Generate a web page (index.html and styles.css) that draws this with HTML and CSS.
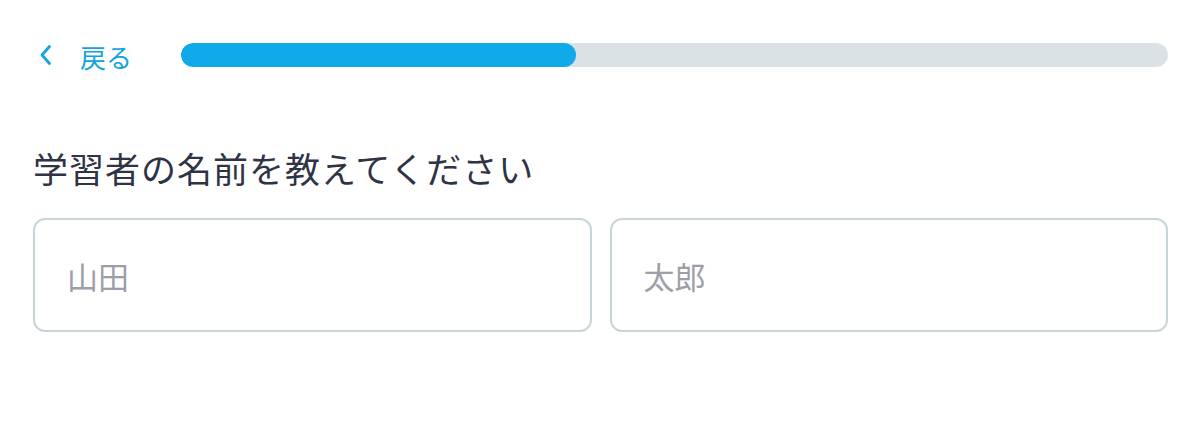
FILE: index.html
```html
<!DOCTYPE html>
<html lang="ja">
<head>
    <meta charset="UTF-8">
    <meta name="viewport" content="width=device-width, initial-scale=1.0">
    <title>学習者の名前</title>
    <link rel="stylesheet" href="styles.css">
</head>
<body>
    <div id="container">
        <div class="top-bar">
            <a class="back" href="#">
                <svg class="back-icon" width="16" height="24" viewBox="0 0 16 24">
                    <path d="M11.5 3.5 L4 12 L11.5 20.5" fill="none" stroke="currentColor" stroke-width="2.8" stroke-linecap="round" stroke-linejoin="round"/>
                </svg>
                <span class="back-label">戻る</span>
            </a>
            <div class="progress">
                <div class="progress-fill" style="width: 40%"></div>
            </div>
        </div>
        <h1 class="question">学習者の名前を教えてください</h1>
        <div class="name-fields">
            <input type="text" class="name-input" placeholder="山田">
            <input type="text" class="name-input" placeholder="太郎">
        </div>
    </div>
</body>
</html>
```
FILE: styles.css
```css
body {
    margin: 0;
    font-family: "Noto Sans CJK JP", "Noto Sans", sans-serif;
    background-color: #ffffff;
}
#container {
    padding: 31px 32px 0 33px;
}
.top-bar {
    display: flex;
    align-items: center;
    gap: 49px;
    height: 48px;
}
.back {
    display: flex;
    align-items: center;
    gap: 26px;
    color: #13a3e3;
    text-decoration: none;
    font-size: 26px;
    padding-left: 5px;
}
.back-label {
    padding-top: 2px;
}
.back-icon {
    display: block;
}
.progress {
    flex: 1;
    height: 24px;
    border-radius: 12px;
    background-color: #dbe2e5;
    overflow: hidden;
}
.progress-fill {
    height: 100%;
    border-radius: 12px;
    background-color: #10a9e9;
}
.question {
    margin: 69px 0 0 0;
    font-size: 35px;
    font-weight: 400;
    color: #2e3445;
    line-height: 40px;
    letter-spacing: 1px;
}
.name-fields {
    display: flex;
    gap: 18px;
    margin-top: 30px;
}
.name-input {
    flex: 1;
    min-width: 0;
    height: 114px;
    box-sizing: border-box;
    border: 2px solid #c9d4d9;
    border-radius: 12px;
    padding: 0 32px;
    font-family: inherit;
    font-size: 31px;
    color: #2e3445;
    outline: none;
}
.name-input::placeholder {
    color: #9d9ea8;
}
```
